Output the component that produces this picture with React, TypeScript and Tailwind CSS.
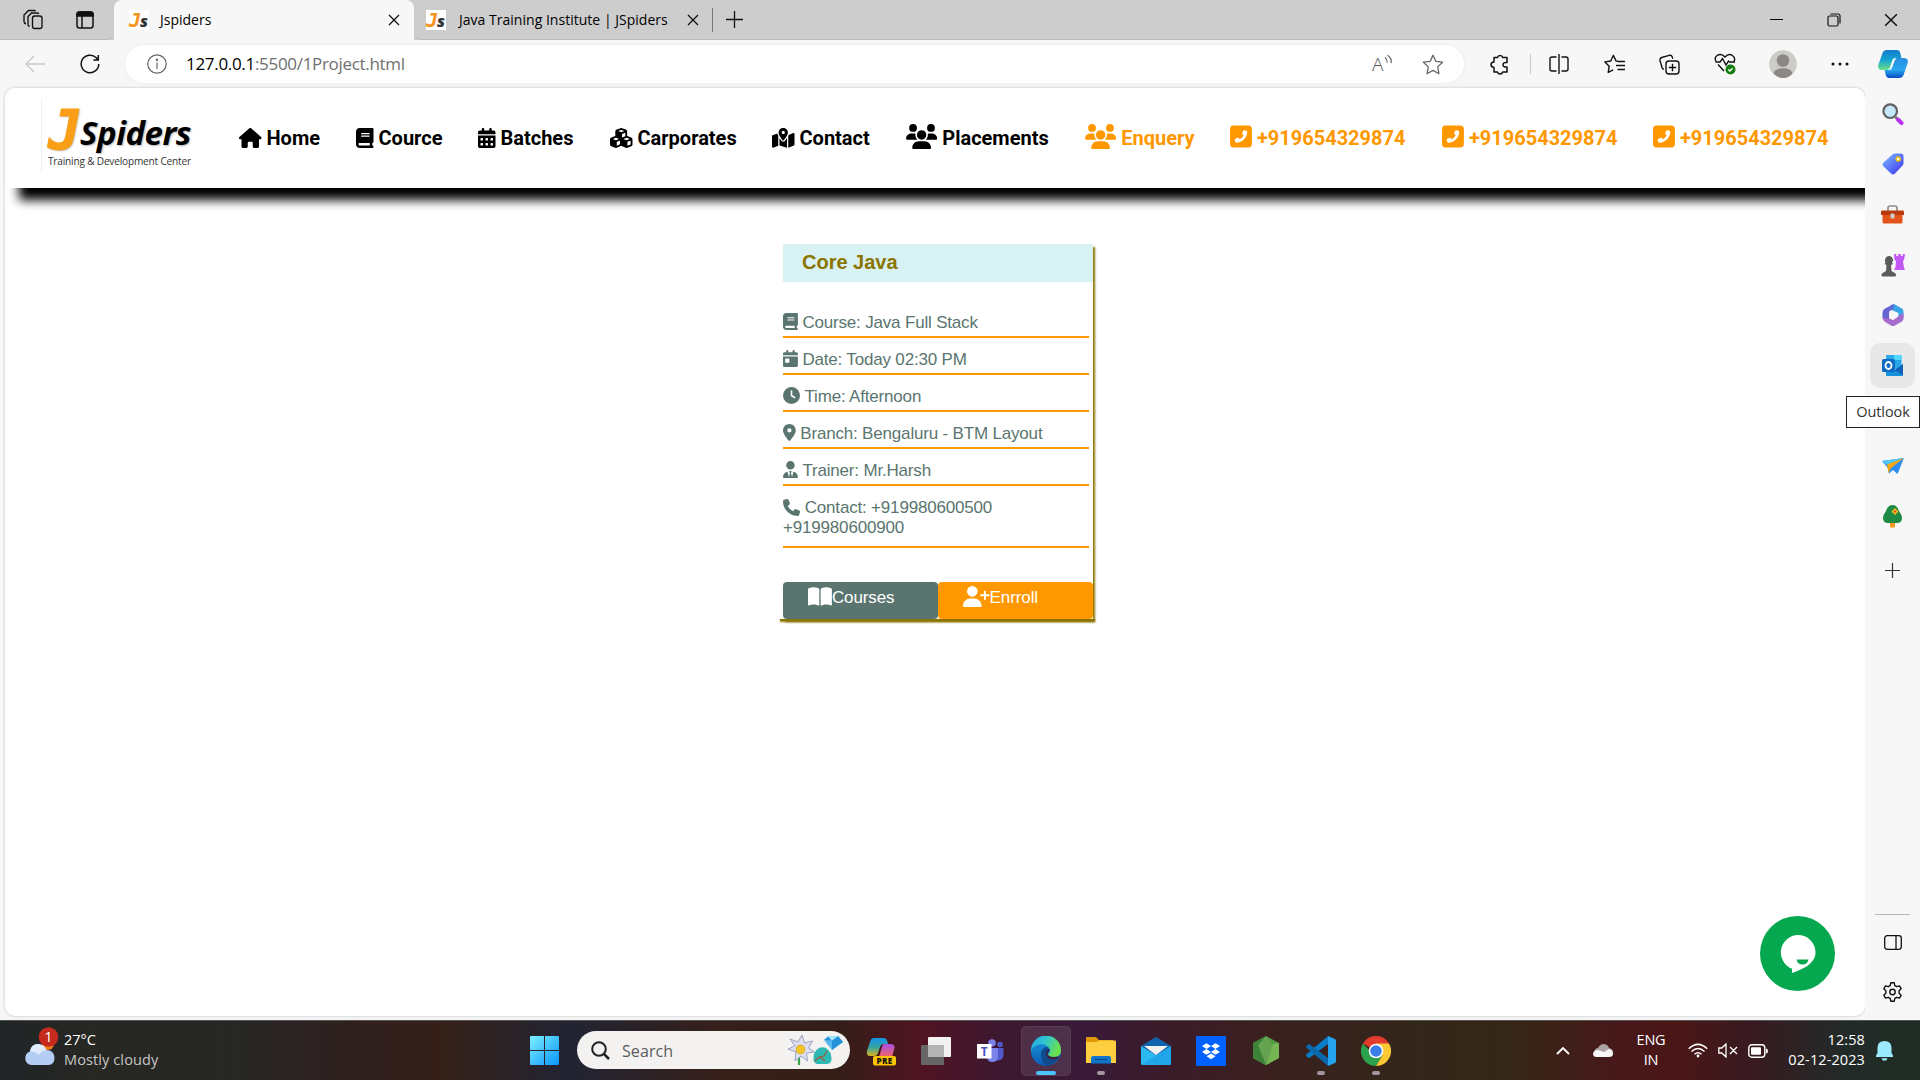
import React from "react";
import {
  FaHouse, FaBook, FaCalendarDays, FaCubes, FaMapLocationDot, FaUsers, FaSquarePhoneFlip,
  FaCalendarDay, FaClock, FaLocationDot, FaUserTie, FaPhone, FaBookOpen, FaUserPlus,
} from "react-icons/fa6";

const ui = "font-['Open_Sans','Noto_Sans',sans-serif]";

function Favicon() {
  return (
    <span className="flex h-5 w-5 shrink-0 items-baseline bg-white italic">
      <span className="w-[11px] font-['DejaVu_Sans_Mono',monospace] text-[20px] font-bold leading-[20px] text-[#f7941d]">J</span>
      <span className="font-['Open_Sans',sans-serif] text-[16px] font-extrabold leading-[20px] text-[#333]">s</span>
    </span>
  );
}

function Cross({ size = 12 }: { size?: number }) {
  return (
    <svg width={size} height={size} viewBox="0 0 12 12" stroke="#111" strokeWidth="1.3" fill="none">
      <path d="M1 1l10 10M11 1L1 11" />
    </svg>
  );
}

function TabStrip() {
  return (
    <div className={`flex h-10 items-stretch bg-[#cdcdcd] text-[14.5px] text-black ${ui}`}>
      <div className="flex w-[114px] items-center rounded-br-lg border-b border-[#bcbcbc]">
        <svg className="ml-[22px]" width="22" height="22" viewBox="0 0 22 22" fill="none" stroke="#111" strokeWidth="1.35">
          <rect x="10.500" y="7" width="9.500" height="12.500" rx="2.200" />
          <path d="M7.500 17.500Q6 17 6 15.500V7.500L9.500 4H15q1.400 0 1.800 1M4 14.800Q2 14.500 2 12.500V6L6.500 1.500H12q1.200 0 1.600.6" />
        </svg>
        <svg className="ml-[32px]" width="18" height="18" viewBox="0 0 18 18" fill="none" stroke="#111" strokeWidth="1.500">
          <rect x="1" y="1" width="16" height="16" rx="2.500" />
          <path d="M1 5V3.500Q1 1 3.500 1h11Q17 1 17 3.500V5z" fill="#111" />
          <path d="M6 5v12" />
        </svg>
      </div>
      <div className="flex w-[300px] items-center rounded-t-lg bg-[#f7f7f7] pl-[15px]">
        <Favicon />
        <span className="-mt-0.5 ml-[11px] w-[228px] text-[14px]">Jspiders</span>
        <Cross />
      </div>
      <div className="flex w-[299px] items-center rounded-bl-lg border-b border-[#bcbcbc] pl-3">
        <Favicon />
        <span className="-mt-px ml-[13px] w-[228px] whitespace-nowrap text-[14px] tracking-[0.02px]">Java Training Institute | JSpiders</span>
        <Cross />
      </div>
      <div className="flex flex-1 items-center border-b border-[#bcbcbc]">
        <div className="-ml-px h-6 w-px bg-[#777]" />
        <svg className="ml-[13px]" width="17" height="17" viewBox="0 0 17 17" stroke="#111" strokeWidth="1.3"><path d="M8.500 0v17M0 8.500h17" /></svg>
      </div>
      <div className="flex w-[172px] items-center border-b border-[#bcbcbc]">
        <div className="flex w-[57px] justify-center"><div className="h-px w-[13px] bg-black" /></div>
        <div className="flex w-[57px] justify-center">
          <svg width="14" height="14" viewBox="0 0 14 14" fill="none" stroke="#111" strokeWidth="1.200"><rect x="1" y="3" width="10" height="10" rx="1.500" /><path d="M3.500 1H11q2 0 2 2v7.500" /></svg>
        </div>
        <div className="flex w-[58px] justify-center"><Cross size={14} /></div>
      </div>
    </div>
  );
}

function Toolbar() {
  return (
    <div className={`flex h-12 items-center bg-[#f7f7f7] ${ui}`}>
      <div className="flex w-[70px] justify-center">
        <svg width="20" height="18" viewBox="0 0 20 18" fill="none" stroke="#c9c9c9" strokeWidth="1.400"><path d="M9 1L1 9l8 8M1 9h19" /></svg>
      </div>
      <div className="flex w-[40px] justify-center">
        <svg width="20" height="20" viewBox="0 0 20 20" fill="none" stroke="#111" strokeWidth="1.500"><path d="M18.800 10a8.800 8.800 0 1 1-2.500-6.200L18 5.800M18.300 1v5h-5" /></svg>
      </div>
      <div className="ml-[15px] flex h-[38px] w-[1339px] items-center rounded-full bg-white shadow-[0_0_3px_#e4e4e4]">
        <svg className="ml-[22px]" width="20" height="20" viewBox="0 0 20 20" fill="none" stroke="#666" strokeWidth="1.200"><circle cx="10" cy="10" r="9.200" /><path d="M10 8.500V15" /><circle cx="10" cy="5.800" r=".6" fill="#666" /></svg>
        <span className="-mt-px ml-[19px] whitespace-nowrap text-[17px] tracking-[-0.31px] text-[#6f6f6f]"><span className="text-black">127.0.0.1</span>:5500/1Project.html</span>
        <svg className="ml-auto" width="23" height="28" viewBox="0 -4 23 28" fill="none" stroke="#666" strokeWidth="1.200"><text x="1" y="17" fontSize="19" fontWeight="300" fill="#555" stroke="none">A</text><path d="M14 3.500q2.500 2 2.200 5M16.500 1.200q4.500 3 3.600 8" /></svg>
        <svg className="ml-[28px] mr-[20px]" width="22" height="21" viewBox="0 0 22 21" fill="none" stroke="#666" strokeWidth="1.300" strokeLinejoin="round"><path d="M11 1.200l2.900 6.200 6.700.8-4.900 4.700 1.200 6.800L11 16.400l-5.900 3.300 1.200-6.800-4.900-4.700 6.700-.8z" /></svg>
      </div>
      <div className="flex w-[66px] justify-center pl-1.5">
        <svg width="20" height="21" viewBox="0 0 20 21" fill="none" stroke="#111" strokeWidth="1.500" strokeLinejoin="round"><path d="M4 3.500h3.500a2.700 2.700 0 0 1 5.200 0H17v5q-4-.5-4 2.200t4 2.300V18h-4.300a2.700 2.700 0 0 1-5.200 0H4v-4.600q-3-.3-3-2.700t3-2.600z" /></svg>
      </div>
      <div className="h-5 w-px bg-[#c8c8c8]" />
      <div className="flex w-[56px] justify-center">
        <svg width="20" height="20" viewBox="0 0 20 20" fill="none" stroke="#111" strokeWidth="1.400"><path d="M7.500 3H3Q1 3 1 5v10q0 2 2 2h4.500M12.500 3H17q2 0 2 2v10q0 2-2 2h-4.500M10 0v20" /></svg>
      </div>
      <div className="flex w-[55px] justify-center">
        <svg width="21" height="20" viewBox="0 0 21 20" fill="none" stroke="#111" strokeWidth="1.400" strokeLinejoin="round"><path d="M14 7.200l-2-.3-2.600-5.600L6.800 7 .9 7.900l4.300 4.300-1 6.200 5-2.500M13.500 7.500H21M12 11.500h9M13.500 15.500H21" /></svg>
      </div>
      <div className="flex w-[55px] justify-center">
        <svg width="21" height="21" viewBox="0 0 21 21" fill="none" stroke="#111" strokeWidth="1.400"><rect x="7" y="7" width="13" height="13" rx="3" /><path d="M13.500 9.800v7.400M9.800 13.500h7.400M4.800 15.500Q3.500 15 3 13.500L1 6.500Q.5 4.300 2.700 3.500l7.500-2.200q2.300-.6 3 1.600l.6 1.800" /></svg>
      </div>
      <div className="flex w-[56px] justify-center">
        <svg width="22" height="22" viewBox="0 0 22 22" fill="none" stroke="#111" strokeWidth="1.400"><path d="M2 8.500Q0 4.500 3 2.500q4.300-2.600 8 1.500 3.700-4.100 7.500-1.500 3.500 2.600 1.300 6.500M4 11.500l6 6.500M1.500 9H6l2.500-3.500L12 12l2.500-4 1 1H21" /><circle cx="16.500" cy="16.500" r="5" fill="#107c10" stroke="none" /><path d="M14.200 16.500l1.700 1.500 2.700-2.800" stroke="#fff" /></svg>
      </div>
      <div className="flex w-[60px] justify-center">
        <svg width="28" height="28" viewBox="0 0 28 28"><circle cx="14" cy="14" r="13.800" fill="#cdcbc8" /><circle cx="14" cy="10.500" r="6.300" fill="#8a8784" /><path d="M4.500 23.500Q6 18.300 14 18.300t9.500 5.200Q19.500 28 14 28t-9.500-4.500" fill="#8a8784" /></svg>
      </div>
      <div className="flex w-[54px] justify-center">
        <svg width="18" height="4" viewBox="0 0 18 4" fill="#111"><circle cx="2" cy="2" r="1.500" /><circle cx="9" cy="2" r="1.500" /><circle cx="16" cy="2" r="1.500" /></svg>
      </div>
      <div className="flex w-[52px] justify-center"><Copilot /></div>
    </div>
  );
}

function Copilot() {
  return (
    <svg width="30" height="28" viewBox="0 0 30 28">
      <defs>
        <linearGradient id="cpa" x1="0" y1="0" x2="0" y2="1"><stop stopColor="#1379cf" /><stop offset=".5" stopColor="#14a5cf" /><stop offset="1" stopColor="#6fe08a" /></linearGradient>
        <linearGradient id="cpb" x1="0" y1="0" x2="0" y2="1"><stop stopColor="#2a8de0" /><stop offset=".6" stopColor="#27a8ee" /><stop offset="1" stopColor="#0b4bc4" /></linearGradient>
      </defs>
      <path d="M9 0h10q2.500 0 3.300 3l1.400 6h-6q-2.500 0-3.200 2.500l-2 6.500Q11.500 20 9 20H4Q-.5 20 .3 15L4.500 3Q5.500 0 9 0z" fill="url(#cpa)" />
      <path d="M21 28H11q-2.500 0-3.300-3l-1-5H10q3.300 0 4-2.500l2.500-7Q17.500 8 20 8h6q4.500 0 3.700 5l-4.200 12Q24.500 28 21 28z" fill="url(#cpb)" />
      <path d="M14 11q.8-3 3.600-3h1q-1.500.6-2.100 2.500l-2.500 7Q13.200 20 10.500 20H10q1.300-.6 2-2.500z" fill="#f4fbff" />
    </svg>
  );
}

const nav = [
  { label: "Home", Icon: FaHouse, w: "w-[117px]", size: "h-5 w-[22.5px]", hot: false },
  { label: "Cource", Icon: FaBook, w: "w-[122px]", size: "h-5 w-[17.5px]", hot: false },
  { label: "Batches", Icon: FaCalendarDays, w: "w-[132px]", size: "h-5 w-[17.5px]", hot: false },
  { label: "Carporates", Icon: FaCubes, w: "w-[162px]", size: "h-5 w-[22.5px]", hot: false },
  { label: "Contact", Icon: FaMapLocationDot, w: "w-[134px]", size: "h-5 w-[22.5px]", hot: false },
  { label: "Placements", Icon: FaUsers, w: "w-[179px]", size: "-mt-[3px] h-[25px] w-[31.25px]", hot: false },
  { label: "Enquery", Icon: FaUsers, w: "w-[145px]", size: "-mt-[3px] h-[25px] w-[31.25px]", hot: true },
  { label: "+919654329874", Icon: FaSquarePhoneFlip, w: "w-[212px]", size: "-mt-[3px] h-[25px] w-[21.9px]", hot: true },
  { label: "+919654329874", Icon: FaSquarePhoneFlip, w: "w-[211px]", size: "-mt-[3px] h-[25px] w-[21.9px]", hot: true },
  { label: "+919654329874", Icon: FaSquarePhoneFlip, w: "w-[190px]", size: "-mt-[3px] h-[25px] w-[21.9px]", hot: true },
];

function SiteHeader() {
  return (
    <header className="flex h-[100px] w-full bg-white shadow-[14px_12px_10px_black]">
      <div className="mt-[10px] ml-[36px] h-[75px] w-[158px] border-l border-[#f0f0f0] pl-[6px]">
        <div className="flex h-[52px] items-start font-bold italic [text-shadow:1px_1px_2px_rgba(0,0,0,0.3)]">
          <span className="mt-[6px] w-[32px] shrink-0 font-['DejaVu_Sans_Mono',monospace] text-[55px] leading-[52px] text-[#fb9e17] [-webkit-text-stroke:1px_#fb9e17]">J</span>
          <span className="mt-[15px] font-['Open_Sans',sans-serif] text-[33px] leading-[40px] tracking-[-0.5px] text-black">Spiders</span>
        </div>
        <div className="mt-[3px] origin-left scale-x-[0.875] whitespace-nowrap font-['Open_Sans',sans-serif] text-[11.5px] leading-[15px] tracking-[-0.2px] text-[#333]">Training &amp; Development Center</div>
      </div>
      <nav className="ml-[40px] flex h-full items-center font-['Roboto',sans-serif] text-[20px] font-bold">
        {nav.map(({ label, Icon, w, size, hot }, i) => (
          <a key={i} className={`flex shrink-0 items-center gap-[5px] whitespace-nowrap ${w} ${hot ? "text-[#ff9800]" : "text-black"}`}>
            <Icon className={`shrink-0 ${size}`} />
            <span>{label}</span>
          </a>
        ))}
      </nav>
    </header>
  );
}

const rows = [
  { Icon: FaBook, w: "w-[14.9px]", text: "Course: Java Full Stack" },
  { Icon: FaCalendarDay, w: "w-[14.9px]", text: "Date: Today 02:30 PM" },
  { Icon: FaClock, w: "w-[17px]", text: "Time: Afternoon" },
  { Icon: FaLocationDot, w: "w-[12.75px]", text: "Branch: Bengaluru - BTM Layout" },
  { Icon: FaUserTie, w: "w-[14.9px]", text: "Trainer: Mr.Harsh" },
];

function CourseCard() {
  return (
    <section className="ml-[778px] mt-[56px] h-[375px] w-[310px] bg-white font-['Liberation_Sans',sans-serif] text-[17px] tracking-[-0.18px] text-[#5a756f] shadow-[2px_3px_2px_#8b7500]">
      <h2 className="h-[38px] bg-[#d8f1f2] pl-[19px] text-[20px] font-bold leading-[36px] tracking-normal text-[#8b7500]">Core Java</h2>
      <div className="pt-[19px]">
        {rows.map(({ Icon, w, text }) => (
          <div key={text} className="flex h-[37px] w-[306px] items-end border-b-2 border-[#ff9800] pb-[3px]">
            <Icon className={`mb-[3px] h-[17px] shrink-0 ${w}`} />
            <span className="ml-[4.500px] leading-[20px]">{text}</span>
          </div>
        ))}
        <div className="h-[62px] w-[306px] border-b-2 border-[#ff9800] pt-[12px] leading-[20px]">
          <div className="flex items-center"><FaPhone className="mr-[4.700px] -mt-[2px] h-[17px] w-[17px]" />Contact: +919980600500</div>
          <div>+919980600900</div>
        </div>
      </div>
      <div className="mt-[34px] flex h-[37px] tracking-normal text-white">
        <div className="flex w-[155px] rounded bg-[#5a756f] pl-[25px] pt-[4px]"><FaBookOpen className="h-[21.25px] w-[23.9px]" /><span className="mt-px leading-[21px] tracking-[-0.1px]">Courses</span></div>
        <div className="flex w-[155px] rounded bg-[#ff9800] pl-[25px] pt-[4px]"><FaUserPlus className="h-[21.25px] w-[26.6px]" /><span className="mt-px leading-[21px] tracking-[-0.1px]">Enrroll</span></div>
      </div>
      <div className="-ml-[3px] h-[2px] w-[315px] bg-[#8b7500] shadow-[0_1px_2px_#8b7500]" />
    </section>
  );
}

function Page() {
  return (
    <main className="relative h-[928px] w-[1865px] shrink-0 pl-[5px]">
      <div className="h-full overflow-hidden rounded-[10px] bg-white shadow-[0_0_3px_#bbb]">
        <SiteHeader />
        <CourseCard />
      </div>
      <div className="absolute right-[30px] bottom-[25px] flex h-[75px] w-[75px] items-center justify-center rounded-full bg-[#05a84e]">
        <svg width="36" height="38" viewBox="0 0 36 38"><path d="M18 0a17.500 17.500 0 0 1 17.500 17.500C35.500 28 24 34 12 38v-4.200A17.500 17.500 0 0 1 18 0z" fill="#fff" /><path d="M16.500 24.500h12q-1 5-6 5t-6-5z" fill="#05a84e" /></svg>
      </div>
    </main>
  );
}

function SideCell({ children, active = false }: { children?: React.ReactNode; active?: boolean }) {
  return (
    <div className="flex h-[50.3px] items-center justify-center">
      <div className={`flex h-[45px] w-[45px] items-center justify-center rounded-[10px] ${active ? "bg-[#e8e8e8]" : ""}`}>{children}</div>
    </div>
  );
}

function Sidebar() {
  return (
    <aside className="relative flex h-[932px] w-[55px] flex-col bg-[#f7f7f7] pt-px">
      <SideCell><svg width="22" height="22" viewBox="0 0 22 22"><path d="M13.500 14l2.500 2.500" stroke="#777" strokeWidth="3" /><path d="M16 16.500l3.500 3.500" stroke="#b833f0" strokeWidth="4" strokeLinecap="round" /><circle cx="8.200" cy="8.200" r="6.800" fill="#c5e7fb" stroke="#626262" strokeWidth="2.200" /></svg></SideCell>
      <SideCell>
        <svg width="22" height="22" viewBox="0 0 22 22"><defs><linearGradient id="tag" x1="0" y1="0" x2="1" y2="1"><stop stopColor="#7fc0ff" /><stop offset="1" stopColor="#3a2ff0" /></linearGradient></defs><path d="M10.500 1.500Q11.500.5 13 .5h6Q21.500.5 21.500 3v7q0 1.500-1 2.500l-7.500 8q-2 2-4 0l-7.500-7q-2-2 0-4z" fill="url(#tag)" /><circle cx="16.200" cy="6" r="2" fill="#fff" stroke="#f2c200" strokeWidth="1.500" /></svg>
      </SideCell>
      <SideCell><svg width="23" height="19" viewBox="0 0 23 19"><path d="M7 6V3q0-2 2-2h5q2 0 2 2v3" fill="none" stroke="#8d8d8d" strokeWidth="1.700" /><path d="M1.500 9h20v8q0 1.500-1.500 1.500H3q-1.500 0-1.500-1.500z" fill="#e3541c" /><path d="M1 5.500h21q1 0 1 1.500v3H0V7q0-1.500 1-1.500z" fill="#b93a0e" /><rect x="9.500" y="8.500" width="4" height="5" rx="1" fill="#ccc" /></svg></SideCell>
      <SideCell><svg width="24" height="24" viewBox="0 0 24 24"><path d="M13 1h2.200v2h2V1h2.600v2h2V1H24l-1 6-1 1 .8 6 1.200 3H13l1.500-3 .5-6-1.500-1z" fill="#c258f5" /><path d="M4 7a4 4 0 1 1 7 2.600l1 1.400-2 1 .5 6 4 2.500q1.500 3-1 3H2q-2.500 0-1-3L5 18l.5-6-2-1 1-1.400A4 4 0 0 1 4 7z" fill="#5b5b5b" /></svg></SideCell>
      <SideCell><svg width="22" height="22" viewBox="0 0 22 22"><path d="M8 1.500l4-1.500 8 4.500q1.500 1 1.500 3V14l-5-1V9L9 6z" fill="#38a5e8" /><path d="M12 0L3 4.500Q.5 6 .5 8.500V14l4 3 3-2.500V7l4-2z" fill="#6465d0" /><path d="M.5 14q.5 2.500 2 3.500l6.500 4q2 1 4 0l7-4q1.500-1 1.500-3.500V9L16 12.500l-5 3.500-4-1.500z" fill="#a66bcf" /><path d="M11 6.500l4 2.300v4.600l-4 2.300-4-2.300V8.800z" fill="#f7f7f7" /></svg></SideCell>
      <SideCell active><svg width="21" height="21" viewBox="0 0 21 21"><rect x="4" y="0" width="15.500" height="14" rx="1" fill="#28a8ea" /><path d="M12 0h7.500v5H12z" fill="#50d9ff" /><path d="M4 9l9 6 8-6v11q0 1-1 1H5q-1 0-1-1z" fill="#1490df" /><path d="M21 9l-8 6 8 5.500z" fill="#0f62b5" /><rect x="0" y="4" width="13" height="13" rx="1.500" fill="#0f6ac4" /><ellipse cx="6.500" cy="10.500" rx="3" ry="3.500" fill="none" stroke="#fff" strokeWidth="1.800" /></svg></SideCell>
      <SideCell />
      <SideCell><svg width="22" height="16" viewBox="0 0 22 16"><path d="M0 3l22-3-6.500 16L11 12l-4 3.500-1.500-6z" fill="#2b8ef0" /><path d="M22 0L0 3l5.500 4z" fill="#4cc9f5" /><path d="M22 0L5 6.500 6.500 15 9 10z" fill="#f3a712" /></svg></SideCell>
      <SideCell><svg width="19" height="23" viewBox="0 0 19 23"><path d="M7 15h5v7q-2.500 1.500-5 0z" fill="#f39a1e" /><path d="M9.500 0Q14 0 16 6q3 4 3 7 0 5-5 5H5q-5 0-5-5 0-3 3-7 2-6 6.500-6z" fill="#1f8a43" /><path d="M12 3.500v6M9 6.500h6" stroke="#f6bb18" strokeWidth="2.600" /><circle cx="12" cy="6.500" r="1" fill="#d7351f" /></svg></SideCell>
      <div className="flex h-[57px] items-center justify-center"><svg width="15" height="15" viewBox="0 0 15 15" stroke="#333" strokeWidth="1.200"><path d="M7.500 0v15M0 7.500h15" /></svg></div>
      <div className="mx-auto mt-auto h-px w-[35px] bg-[#b8b8b8]" />
      <div className="flex h-[54px] items-center justify-center"><svg width="18" height="15" viewBox="0 0 18 15" fill="none" stroke="#111" strokeWidth="1.300"><rect x=".7" y=".7" width="16.600" height="13.600" rx="2.500" /><path d="M12 1v13" /></svg></div>
      <div className="mb-[17px] flex h-[34px] items-end justify-center"><svg width="21" height="21" viewBox="0 0 21 21" fill="none" stroke="#111" strokeWidth="1.400" strokeLinejoin="round"><path d="M8.800.8h3.400l.6 2.800 2 1.100 2.700-.9 1.700 3-2.100 1.900v2.600l2.100 1.900-1.700 3-2.700-.9-2 1.100-.6 2.800H8.800l-.6-2.800-2-1.100-2.700.9-1.700-3 2.100-1.900V8.700L1.800 6.800l1.700-3 2.700.9 2-1.100z" /><circle cx="10.500" cy="10" r="2.700" /></svg></div>
      <div className={`absolute top-[308px] right-0 flex h-[32px] w-[74px] items-center justify-center whitespace-nowrap border border-[#222] bg-white text-[14.500px] tracking-[-0.1px] text-[#333] ${ui}`}>Outlook</div>
    </aside>
  );
}

function TaskItem({ children, mark = "", active = false }: { children: React.ReactNode; mark?: string; active?: boolean }) {
  return (
    <div className="flex w-[55px] justify-center">
      <div className={`relative flex h-[50px] w-[50px] items-center justify-center rounded-[5px] ${active ? "bg-white/10 ring-1 ring-inset ring-white/5" : ""}`}>
        {children}
        {mark && <span className={`absolute bottom-px h-1 rounded-full ${mark}`} />}
      </div>
    </div>
  );
}

function Taskbar() {
  return (
    <footer className={`flex h-[60px] items-center border-t border-[#555] bg-[linear-gradient(90deg,#202527_0px,#272723_90px,#262825_220px,#2f201f_350px,#352018_440px,#222433_570px,#36201a_720px,#351e18_840px,#501422_920px,#3d1730_1000px,#381a38_1090px,#3a1c28_1170px,#3a201f_1260px,#33261a_1420px,#352717_1510px,#48181a_1620px,#4a1616_1680px,#381a20_1750px,#232a28_1840px,#1f2d25_1920px)] text-white ${ui}`}>
      <div className="flex w-[530px] items-center pl-[24px]">
        <svg className="-mt-[7px]" width="36" height="40" viewBox="0 0 36 40"><circle cx="24" cy="17" r="6" fill="#f17c16" /><path d="M7 38a7 7 0 0 1-1-13.500Q7 17 14 17q6 0 8.500 6 7.500 0 8 8 0 6.500-6 7z" fill="#b3cdf5" /><path d="M6 24.500Q7 17 14 17q6 0 8.500 6-6 1-7.500 5-4-4-9-3.500z" fill="#e1edff" /><circle cx="24.500" cy="10" r="9.800" fill="#c42b1c" /><text x="24.500" y="15" textAnchor="middle" fontSize="14" fill="#fff">1</text></svg>
        <div className="-mt-px ml-[4px] text-[14.500px] leading-[20px]"><div>27°C</div><div className="tracking-[0.11px] text-[#c6c6c6]">Mostly cloudy</div></div>
      </div>
      <svg width="29" height="29" viewBox="0 0 29 29"><defs><linearGradient id="win" x1="0" y1="0" x2="1" y2="1"><stop stopColor="#7cf0ff" /><stop offset="1" stopColor="#0a93ff" /></linearGradient></defs><path d="M0 1q0-1 1-1h13v14H0zM15 0h13q1 0 1 1v13H15zM0 15h14v14H1q-1 0-1-1zM15 15h14v13q0 1-1 1H15z" fill="url(#win)" /></svg>
      <div className="-mt-px ml-[18px] flex h-[38px] w-[273px] items-center rounded-full bg-[#f3f2f1]">
        <svg className="ml-[14px]" width="19" height="19" viewBox="0 0 19 19" fill="none" stroke="#222" strokeWidth="2"><circle cx="8" cy="8" r="6.800" /><path d="M13 13l5 5" strokeWidth="2.500" /></svg>
        <span className="mt-px ml-[12px] text-[16px] tracking-[0.1px] text-[#5c5c5c]">Search</span>
        <svg className="ml-auto mr-[6px]" width="57" height="34" viewBox="0 0 57 34">
          <path d="M12 18v14" stroke="#37a447" strokeWidth="2.200" />
          <path d="M15 2l2.500 8 8-2-4 7 6 4-8 1 1 8-6.500-5-6 5 1-9-8-3 7-3-5-7 8 3z" fill="#dedff0" stroke="#8d90b8" strokeWidth=".8" /><circle cx="13.500" cy="16.500" r="4.500" fill="#f2c528" stroke="#c9960f" strokeWidth=".6" />
          <path d="M41 3.500L51 3l5 6-11 8-8-10z" fill="#59b9ee" /><path d="M41 3.500l4 4-8-.5zM51 3l5 6-11 8V7.500z" fill="#2593db" /><path d="M41 3.500L51 3l-6 4.500z" fill="#a4e5fc" />
          <path d="M27 21q4-9 12-6 6 4 5.500 12-1 4-5 4H30q-5-1-3-10z" fill="#2db9b3" /><path d="M28 28l4-4 5-1 3-5M33 24l5 4" stroke="#a25b36" strokeWidth="1.200" fill="none" />
        </svg>
      </div>
      <div className="ml-[3px] flex">
        <TaskItem>
          <svg width="30" height="30" viewBox="0 0 30 30"><defs><linearGradient id="pa" x1="0" y1="0" x2="0" y2="1"><stop stopColor="#178fe8" /><stop offset=".5" stopColor="#31a5a6" /><stop offset="1" stopColor="#d8b51c" /></linearGradient><linearGradient id="pb" x1="0" y1="0" x2="0" y2="1"><stop stopColor="#a94de8" /><stop offset="1" stopColor="#f0675f" /></linearGradient></defs><path d="M8 2h10q3 0 4 6h-4q-3 0-4 3l-2 6q-1 3-4 3H4q-4 0-3-5l3-9q1-4 4-4z" fill="url(#pa)" /><path d="M18 8h7q5 0 3 6l-2 7H13l3-10q.5-3 2-3z" fill="url(#pb)" /><rect x="7" y="20" width="23" height="9.500" rx="2" fill="#ffc400" /><text x="18.500" y="27.800" textAnchor="middle" fontSize="8" fontWeight="800" letterSpacing=".3" fill="#111">PRE</text></svg>
        </TaskItem>
        <TaskItem><svg width="30" height="28" viewBox="0 0 30 28"><rect x="0" y="8" width="23" height="20" rx="1" fill="#666" /><rect x="7" y="0" width="23" height="20" rx="1" fill="#f1f1f1" /><path d="M7 8h16v12H7z" fill="#b4b4b4" /></svg></TaskItem>
        <TaskItem><svg width="27" height="24" viewBox="0 0 27 24"><circle cx="23" cy="5.500" r="2.800" fill="#5059c9" /><circle cx="15" cy="4" r="3.800" fill="#7b83eb" /><path d="M17 9h9.500v8q-1 4-5 4.500h-4z" fill="#5059c9" /><path d="M9 9h12v8q0 6-6 6-4 0-5-4z" fill="#7b83eb" /><rect x="0" y="5" width="14.500" height="14.500" fill="#fff" /><text x="7.250" y="16.500" textAnchor="middle" fontSize="12" fontWeight="700" fill="#4b53bc">T</text></svg></TaskItem>
        <TaskItem active mark="w-5 bg-[#4cc2ff]">
          <svg width="30" height="30" viewBox="0 0 30 30"><defs><linearGradient id="ea" x1="0" y1="0" x2="1" y2="0.400"><stop stopColor="#25a5e6" /><stop offset=".5" stopColor="#31c5d0" /><stop offset="1" stopColor="#6be04a" /></linearGradient><linearGradient id="eb" x1="0" y1="0" x2="0" y2="1"><stop stopColor="#1c98e0" /><stop offset="1" stopColor="#0b5cb2" /></linearGradient></defs><circle cx="15" cy="15" r="15" fill="url(#eb)" /><path d="M0 15A15 15 0 0 1 30 14q0 7-7 7-6 0-6-2.500 2-1 2-4Q18 9 11 8 3 8 0 15z" fill="url(#ea)" /><path d="M10 18q0-5 5-7 4 .5 4 4-3 1-2 4 3 4 11 1.800-4 8.200-12 9.200-6-3-6-12z" fill="#104a8c" /><path d="M19 14.500q-3 1-2.500 4 2 3 6.500 2.500l6-.500q-2 3-6 3-8 0-8-6 0-4 4-3z" fill="#3f2140" /></svg>
        </TaskItem>
        <TaskItem mark="w-2 bg-[#a3979f]"><svg width="30" height="27" viewBox="0 0 30 27"><path d="M0 1q0-1 1-1h9l3 3h14v8H0z" fill="#e19a05" /><path d="M0 5h11l2-1.500h16q1 0 1 1V26H0z" fill="#fdce40" /><path d="M5 26.500V21q0-2 2-2h16q2 0 2 2v5.500z" fill="#1176c9" /><path d="M9 22.500h12" stroke="#084c8a" strokeWidth="1.300" /></svg></TaskItem>
        <TaskItem><svg width="30" height="28" viewBox="0 0 30 28"><path d="M0 9l15-9 15 9-15 9z" fill="#1263ae" /><path d="M0 9l15 9L30 9v18q0 1-1 1H1q-1 0-1-1z" fill="#2abaf1" /><path d="M0 28L30 9v18q0 1-1 1z" fill="#1e98e2" opacity=".6" /><path d="M3 9h24l-12 9z" fill="#f1f1f1" /></svg></TaskItem>
        <TaskItem><svg width="30" height="30" viewBox="0 0 30 30"><path d="M0 0h30v30H0z" fill="#0061ff" /><path d="M10.500 7.200l4.500 2.900-4.500 2.900L6 10.100zM19.500 7.200l4.500 2.900-4.500 2.900-4.500-2.900zM10.500 13l4.500 2.900-4.500 2.900L6 15.900zM19.500 13l4.500 2.900-4.500 2.900-4.500-2.900zM15 17.400l4.500 2.900-4.500 3-4.500-3z" fill="#fff" /></svg></TaskItem>
        <TaskItem><svg width="26" height="29" viewBox="0 0 26 29"><path d="M13 0l13 7v15l-13 7-13-7V7z" fill="#539a43" /><path d="M13 0l7 8-7 21-13-7 5-13z" fill="#66a350" /><path d="M13 0L5 9l8 20L0 22V7z" fill="#3c8238" /><path d="M20 8l6-1v15l-13 7z" fill="#75b653" /></svg></TaskItem>
        <TaskItem mark="w-2 bg-[#a3979f]"><svg width="30" height="30" viewBox="0 0 30 30"><path d="M22 0v8L4 21.500q-1 .8-2 0l-1.500-1.300q-1-1 0-2z" fill="#0a7cc6" /><path d="M22 30v-8L4 8.500q-1-.8-2 0L.5 9.800q-1 1 0 2z" fill="#0a68ab" /><path d="M22 0l7 3q1 .5 1 1.500v21q0 1-1 1.500l-7 3z" fill="#25a2ed" /></svg></TaskItem>
        <TaskItem mark="w-2 bg-[#a3979f]"><svg width="30" height="30" viewBox="0 0 30 30"><path d="M15 15L2 7.500A15 15 0 0 1 28 7.500z" fill="#e33b2e" /><path d="M15 15h-6L2 7.500A15 15 0 0 0 15 30l6.500-11z" fill="#2ba24c" /><path d="M15 7.500h13A15 15 0 0 1 15 30l6.500-11z" fill="#fcc934" /><circle cx="15" cy="15" r="7.300" fill="#fff" /><circle cx="15" cy="15" r="5.800" fill="#3a7de8" /></svg></TaskItem>
      </div>
      <div className="ml-auto flex items-center">
        <svg width="14" height="9" viewBox="0 0 14 9" fill="none" stroke="#fff" strokeWidth="1.800"><path d="M1 8l6-6 6 6" /></svg>
        <svg className="ml-[23px]" width="20" height="13" viewBox="0 0 20 13"><path d="M1 8Q2 4 5 4q2-4 6-4 4 .5 5 4 4 1 4 4l-10 1z" fill="#aaa3a2" /><path d="M3.500 13Q0 13 0 9.500 1 6 5 6l6 2 5-3q4 1 4 4.500 0 3.500-4 3.500z" fill="#f7f7f7" /></svg>
        <div className="-mt-px ml-[20px] w-[36px] text-center text-[14.500px] leading-[20px] tracking-[-0.2px]">ENG<br />IN</div>
        <svg className="ml-[19px]" width="20" height="15" viewBox="0 0 20 15" fill="none" stroke="#fff" strokeWidth="1.500"><path d="M.8 5.800Q10-3 19.200 5.800M3.500 8.500q6.500-6 13 0M6.500 11.200q3.500-3 7 0" /><circle cx="10" cy="13" r="1.400" fill="#fff" stroke="none" /></svg>
        <svg className="ml-[10px]" width="20" height="15" viewBox="0 0 20 15" fill="none" stroke="#fff" strokeWidth="1.300"><path d="M.8 5h3L8 1v13l-4.200-4h-3zM12 4l7 7M19 4l-7 7" /></svg>
        <svg className="ml-[10px]" width="20" height="14" viewBox="0 0 20 14"><rect x=".8" y=".8" width="16" height="12.400" rx="3" fill="none" stroke="#fff" strokeWidth="1.400" /><rect x="3" y="3.200" width="10" height="7.600" rx="1" fill="#fff" /><path d="M18 4.500q2 0 2 2.500t-2 2.500z" fill="#fff" /></svg>
        <div className="-mt-px ml-[18px] w-[79px] whitespace-nowrap text-right text-[14.500px] leading-[20px] tracking-[0.1px]">12:58<br />02-12-2023</div>
        <svg className="ml-[11px] mr-[27px]" width="17" height="20" viewBox="0 0 17 20" fill="#9beafe"><path d="M8.500 0q7 0 7 7v5l1.500 2.500V16H0v-1.500L1.500 12V7q0-7 7-7zM5.500 17.200h6q-.5 2.500-3 2.500t-3-2.500z" /></svg>
      </div>
    </footer>
  );
}

export default function App() {
  return (
    <div className="h-[1080px] w-[1920px] overflow-hidden bg-[#f7f7f7]">
      <TabStrip />
      <Toolbar />
      <div className="flex h-[932px]">
        <Page />
        <Sidebar />
      </div>
      <Taskbar />
    </div>
  );
}
